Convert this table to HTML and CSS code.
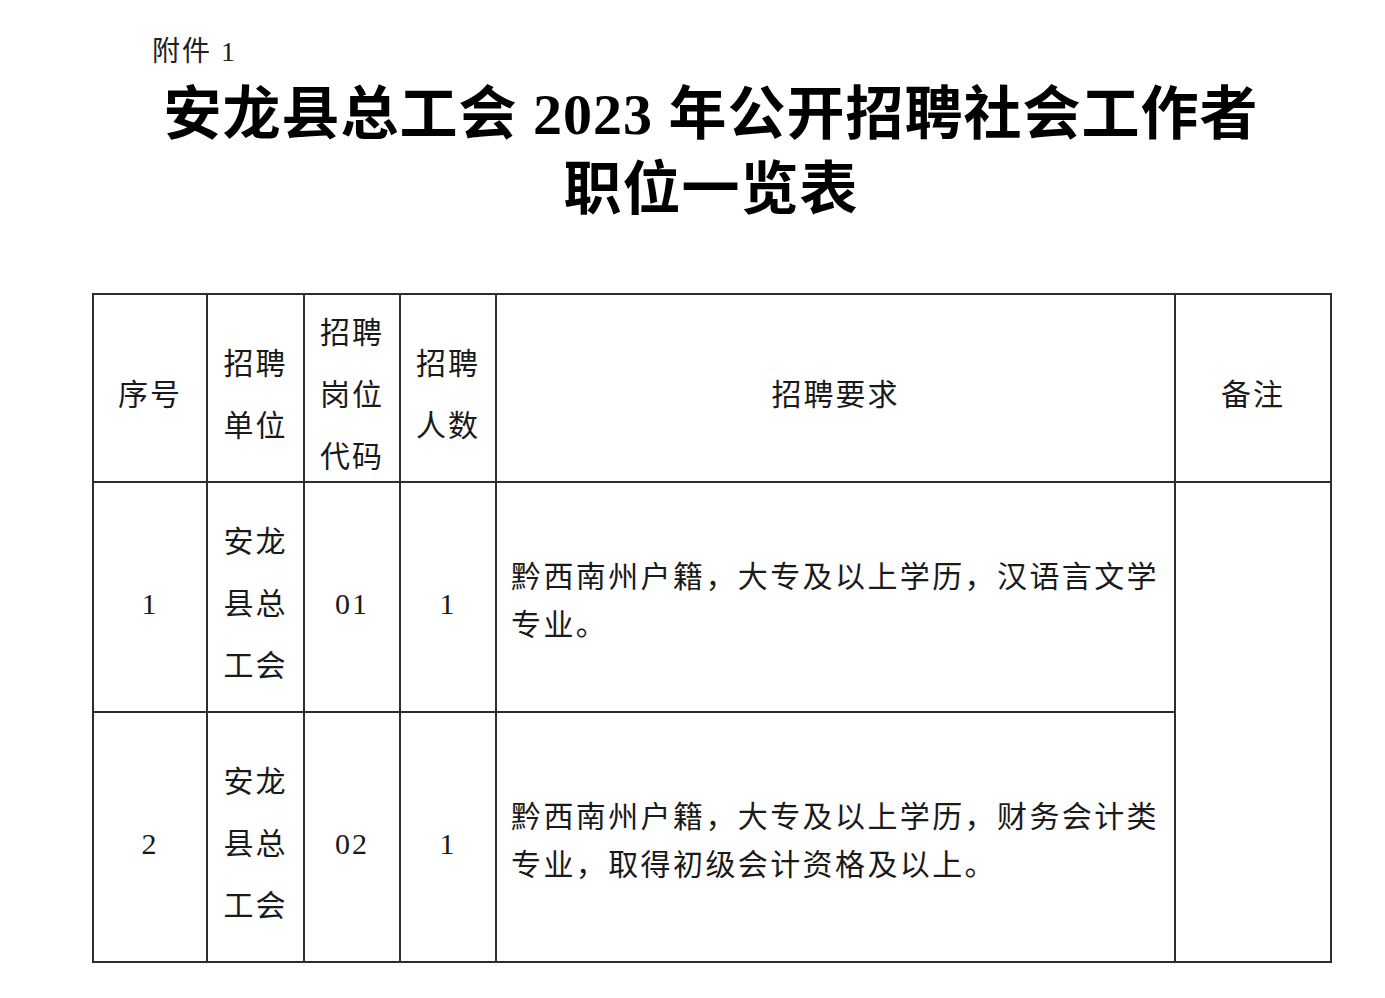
FILE: index.html
```html
<!DOCTYPE html>
<html lang="zh-CN">
<head>
<meta charset="utf-8">
<title>职位一览表</title>
<link rel="stylesheet" href="styles.css">
</head>
<body>
<div class="doc">
  <div class="annex">附件 1</div>
  <h1 class="title">安龙县总工会 2023 年公开招聘社会工作者<br>职位一览表</h1>
  <table class="grid">
    <colgroup>
      <col class="c1"><col class="c2"><col class="c3"><col class="c4"><col class="c5"><col class="c6">
    </colgroup>
    <tr class="head">
      <td><div class="in">序号</div></td>
      <td class="tall"><div class="in">招聘<br>单位</div></td>
      <td class="tall"><div class="in">招聘<br>岗位<br>代码</div></td>
      <td class="tall"><div class="in">招聘<br>人数</div></td>
      <td><div class="in">招聘要求</div></td>
      <td><div class="in">备注</div></td>
    </tr>
    <tr class="r1">
      <td><div class="in">1</div></td>
      <td class="tall"><div class="in">安龙<br>县总<br>工会</div></td>
      <td><div class="in">01</div></td>
      <td><div class="in">1</div></td>
      <td class="req"><div class="in">黔西南州户籍，大专及以上学历，汉语言文学专业。</div></td>
      <td rowspan="2"></td>
    </tr>
    <tr class="r2">
      <td><div class="in">2</div></td>
      <td class="tall"><div class="in">安龙<br>县总<br>工会</div></td>
      <td><div class="in">02</div></td>
      <td><div class="in">1</div></td>
      <td class="req"><div class="in">黔西南州户籍，大专及以上学历，财务会计类专业，取得初级会计资格及以上。</div></td>
    </tr>
  </table>
</div>
</body>
</html>
```

FILE: styles.css
```css
html, body {
  margin: 0;
  padding: 0;
  background: #ffffff;
}
body {
  font-family: "Liberation Serif", "Noto Sans CJK SC", serif;
  color: #141414;
}
.doc {
  margin-left: 92px;
  width: 1238px;
  padding-top: 35px;
}
.annex {
  margin-left: 60px;
  font-size: 28px;
  line-height: 34px;
  letter-spacing: 2px;
  color: #222;
}
.title {
  margin: 8px 0 0 0;
  font-size: 58px;
  line-height: 75px;
  font-weight: bold;
  text-align: center;
  letter-spacing: 1px;
  color: #000;
}
.grid {
  margin-top: 66px;
  width: 1238px;
  table-layout: fixed;
  border-collapse: collapse;
}
.c1 { width: 114px; }
.c2 { width: 97px; }
.c3 { width: 96px; }
.c4 { width: 96px; }
.c5 { width: 679px; }
.c6 { width: 156px; }
.grid td {
  border: 2px solid #2e2e2e;
  padding: 0;
  text-align: center;
  vertical-align: middle;
  font-size: 30px;
  line-height: 40px;
  letter-spacing: 2px;
  color: #1a1a1a;
}
.grid td .in {
  margin: 7px 0 -7px 0;
}
.grid td.tall {
  line-height: 62px;
}
.grid td.req {
  text-align: left;
  padding: 0 6px 0 14px;
  line-height: 48px;
  letter-spacing: 2.4px;
}
.grid td.req .in {
  margin: 4px 0 -4px 0;
}
.head td { height: 186px; }
.r1 td { height: 228px; }
.r2 td { height: 248px; }
```
